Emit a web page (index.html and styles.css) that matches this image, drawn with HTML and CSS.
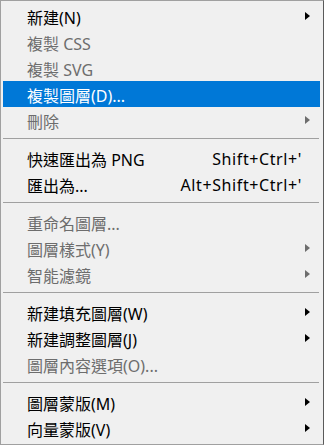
FILE: index.html
```html
<!DOCTYPE html>
<html lang="zh-Hant">
<head>
    <meta charset="UTF-8">
    <title>圖層選單</title>
    <link rel="stylesheet" href="styles.css">
</head>
<body>
    <ul class="menu">
        <li class="item"><span class="label">新建(N)</span><span class="arrow"></span></li>
        <li class="item disabled"><span class="label">複製 CSS</span></li>
        <li class="item disabled"><span class="label">複製 SVG</span></li>
        <li class="item active"><span class="label">複製圖層(D)...</span></li>
        <li class="item disabled"><span class="label">刪除</span><span class="arrow"></span></li>
        <li class="sep"></li>
        <li class="item"><span class="label">快速匯出為 PNG</span><span class="key">Shift+Ctrl+'</span></li>
        <li class="item"><span class="label">匯出為...</span><span class="key">Alt+Shift+Ctrl+'</span></li>
        <li class="sep"></li>
        <li class="item disabled"><span class="label">重命名圖層...</span></li>
        <li class="item disabled"><span class="label">圖層樣式(Y)</span><span class="arrow"></span></li>
        <li class="item disabled"><span class="label">智能濾鏡</span><span class="arrow"></span></li>
        <li class="sep"></li>
        <li class="item"><span class="label">新建填充圖層(W)</span><span class="arrow"></span></li>
        <li class="item"><span class="label">新建調整圖層(J)</span><span class="arrow"></span></li>
        <li class="item disabled"><span class="label">圖層內容選項(O)...</span></li>
        <li class="sep"></li>
        <li class="item"><span class="label">圖層蒙版(M)</span><span class="arrow"></span></li>
        <li class="item"><span class="label">向量蒙版(V)</span><span class="arrow"></span></li>
    </ul>
</body>
</html>
```

FILE: styles.css
```css
body {
    margin: 0;
    background-color: #f0f0f0;
    font-family: "Noto Sans", "Noto Sans CJK TC", sans-serif;
    font-size: 16px;
    color: #000;
}
.menu {
    list-style: none;
    margin: 0;
    width: 324px;
    height: 445px;
    box-sizing: border-box;
    padding: 2px 3px 3px 2px;
    background-color: #f0f0f0;
    border-top: 1px solid #a0a0a0;
    border-left: 1px solid #a0a0a0;
    border-right: 1px solid #5a5a5a;
    border-bottom: 1px solid #a0a0a0;
}
.item {
    display: flex;
    align-items: center;
    height: 26px;
    padding-left: 24px;
    white-space: nowrap;
}
.label {
    flex: 1;
    padding-top: 1px;
}
.key {
    padding-top: 1px;
    padding-right: 18px;
    letter-spacing: 0.6px;
}
.arrow {
    width: 0;
    height: 0;
    margin-right: 10px;
    border-left: 5px solid #000;
    border-top: 4.5px solid transparent;
    border-bottom: 4.5px solid transparent;
}
.disabled {
    color: #6d6d6d;
}
.disabled .arrow {
    border-left-color: #6d6d6d;
}
.active {
    background-color: #0078d7;
    color: #fff;
}
.sep {
    height: 12px;
    box-sizing: border-box;
    padding-top: 5px;
    margin-right: 1px;
}
.sep::before {
    content: "";
    display: block;
    height: 1px;
    background-color: #a0a0a0;
}
```
